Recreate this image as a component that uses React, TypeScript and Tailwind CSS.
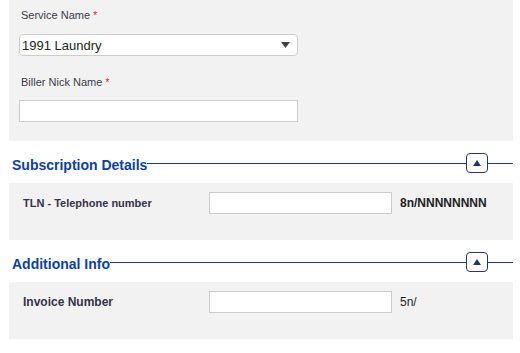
import React from 'react';

function Req() {
    return <span className="ml-[3px] text-[#e0262b]">*</span>;
}

function SectionHeading({ title }: { title: string }) {
    return (
        <div className="mr-[7px] flex h-[20px] items-center pl-[12px]">
            <span className="mt-[4px] self-start text-[14px] font-bold leading-[16px] text-[#0b3fa3]">
                {title}
            </span>
            <div className="h-px flex-1 bg-[#1b3a88]" />
            <button
                type="button"
                aria-label="Collapse"
                className="flex h-[20px] w-[22px] items-center justify-center rounded-[4px] border border-[#27356e] bg-white"
            >
                <svg width="8" height="6" viewBox="0 0 8 6" aria-hidden>
                    <path d="M4 0L8 6H0z" fill="#27356e" />
                </svg>
            </button>
            <div className="h-px w-[25px] bg-[#1b3a88]" />
        </div>
    );
}

function FieldRow({
    label,
    labelClass,
    hint,
    hintBold,
}: {
    label: string;
    labelClass: string;
    hint: string;
    hintBold?: boolean;
}) {
    return (
        <div className="flex items-start pl-[14px] pt-[9px]">
            <span
                className={`w-[186px] pt-[4px] font-bold leading-[14px] text-[#33334a] ${labelClass}`}
            >
                {label}
            </span>
            <input
                type="text"
                className="h-[22px] w-[183px] border border-[#cccccc] bg-white outline-none"
            />
            <span
                className={`ml-[8px] pt-[4px] text-[12px] leading-[14px] text-[#222] ${
                    hintBold ? 'font-bold' : ''
                }`}
            >
                {hint}
            </span>
        </div>
    );
}

export default function App() {
    return (
        <div
            className="h-[353px] w-[520px] bg-white"
            style={{ fontFamily: '"Liberation Sans", Arial, sans-serif' }}
        >
            {/* Biller panel */}
            <div className="ml-[9px] h-[141px] w-[504px] bg-[#f2f2f2] pl-[10px] pt-[9px]">
                <div className="pl-[2px] text-[11px] leading-[13px] text-[#3b3b4b]">
                    Service Name
                    <Req />
                </div>
                <div className="mt-[12px] flex h-[22px] w-[279px] items-center justify-between rounded-[4px] border border-[#cccccc] bg-white pl-[2px] pr-[7px]">
                    <span className="text-[13px] leading-[15px] text-[#222]">
                        1991 Laundry
                    </span>
                    <svg width="9" height="6" viewBox="0 0 9 6" aria-hidden>
                        <path d="M0 0H9L4.5 6z" fill="#444" />
                    </svg>
                </div>
                <div className="mt-[20px] pl-[2px] text-[11px] leading-[13px] text-[#3b3b4b]">
                    Biller Nick Name
                    <Req />
                </div>
                <input
                    type="text"
                    className="mt-[11px] block h-[22px] w-[279px] border border-[#cccccc] bg-white outline-none"
                />
            </div>

            <div className="pt-[12px] pb-[10px]">
                <SectionHeading title="Subscription Details" />
            </div>

            <div className="ml-[9px] h-[57px] w-[504px] bg-[#f2f2f2]">
                <FieldRow
                    label="TLN - Telephone number"
                    labelClass="text-[11px]"
                    hint="8n/NNNNNNNN"
                    hintBold
                />
            </div>

            <div className="pt-[12px] pb-[10px]">
                <SectionHeading title="Additional Info" />
            </div>

            <div className="ml-[9px] h-[57px] w-[504px] bg-[#f2f2f2]">
                <FieldRow
                    label="Invoice Number"
                    labelClass="text-[12px]"
                    hint="5n/"
                />
            </div>
        </div>
    );
}
